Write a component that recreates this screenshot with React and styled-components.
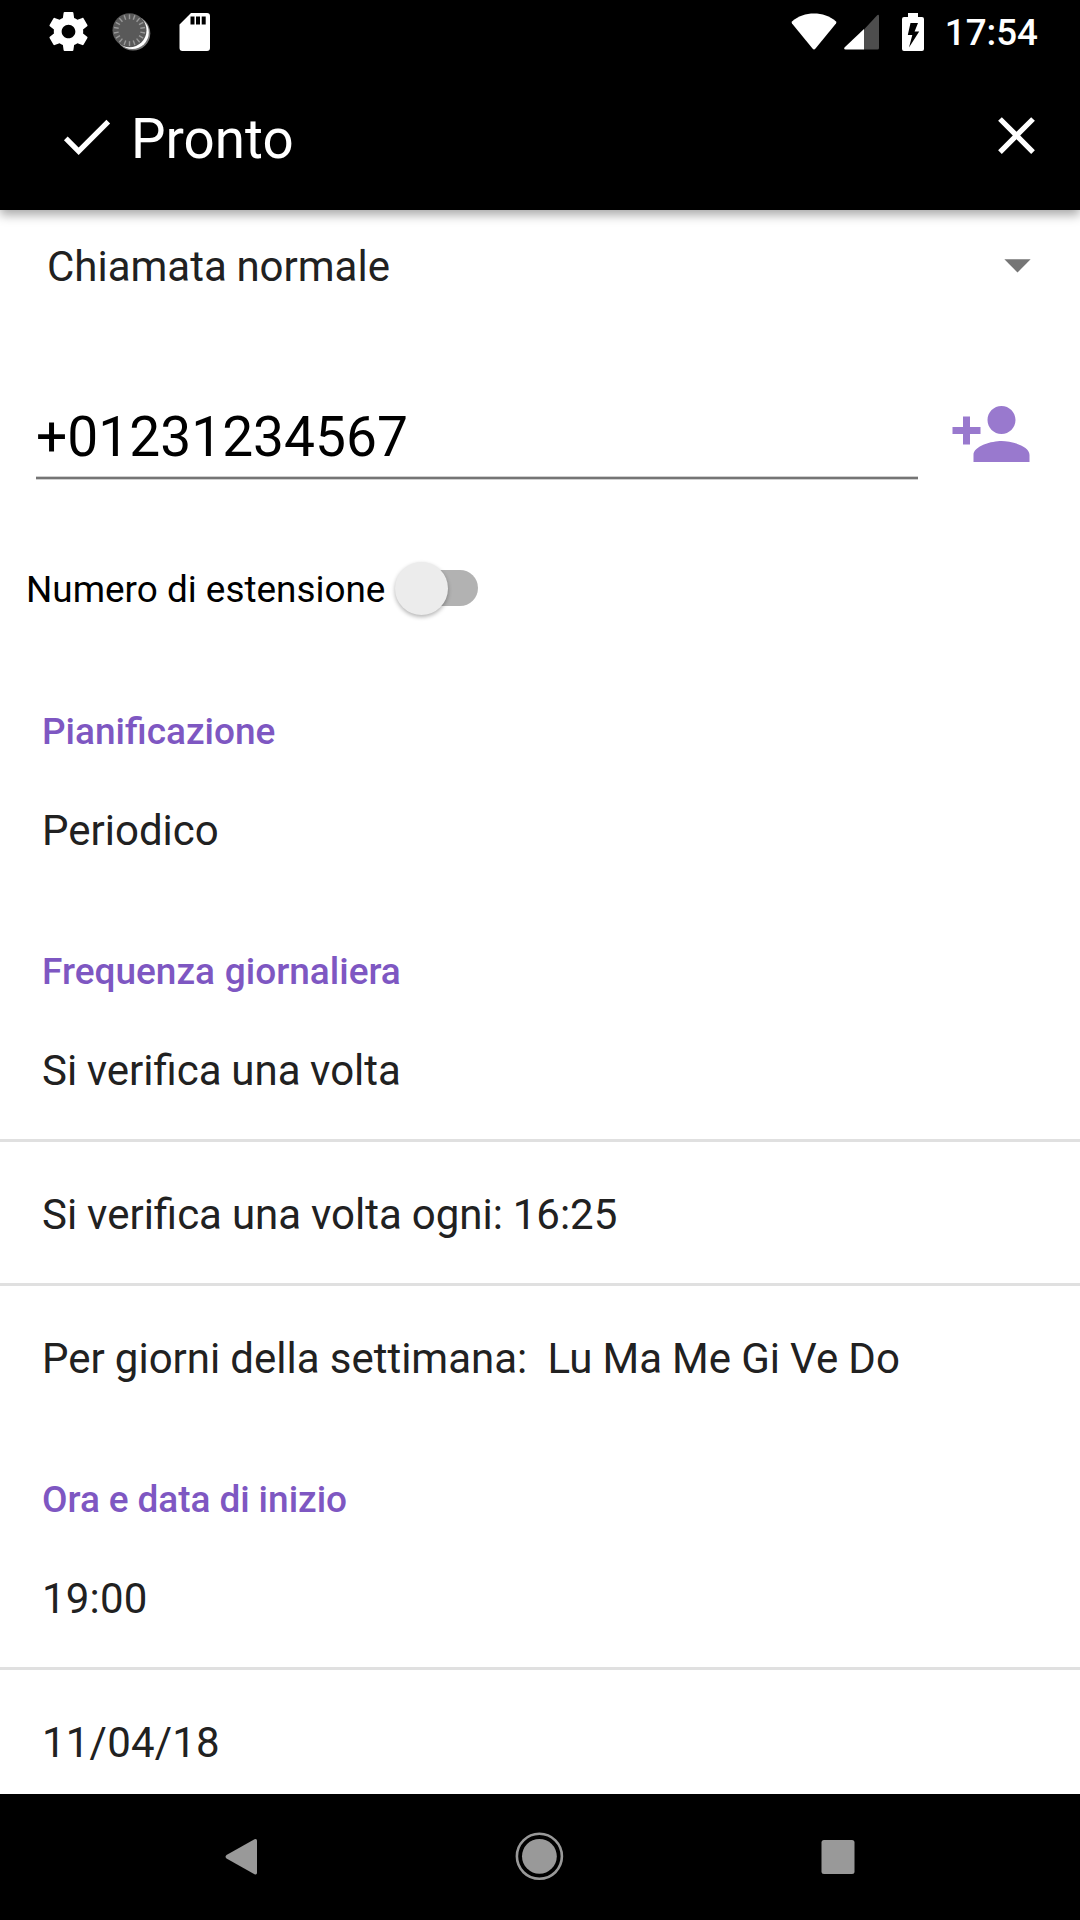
import React from "react";
import styled, { createGlobalStyle } from "styled-components";

const GlobalStyle = createGlobalStyle`
  * { box-sizing: border-box; }
  html, body { margin: 0; padding: 0; background: #fff; }
  body { font-family: Roboto, "Noto Sans", sans-serif; }
`;

const Screen = styled.div`
  width: 1080px;
  height: 1920px;
  display: flex;
  flex-direction: column;
  overflow: hidden;
  background: #fff;
`;

const Icon = styled.svg.attrs({ "aria-hidden": true })`
  display: block;
  flex: none;
  width: ${(p) => p.$w}px;
  height: ${(p) => p.$h || p.$w}px;
  fill: ${(p) => p.$color || "#fff"};
`;

const TopArea = styled.header`
  flex: none;
  height: 210px;
  background: #000;
  color: #fff;
  box-shadow: 0 5px 10px rgba(0, 0, 0, 0.34);
`;

const StatusBar = styled.div`
  height: 63px;
  display: flex;
  justify-content: space-between;
  padding: 0 42px 0 45px;
`;

const StatusGroup = styled.div`
  display: flex;
  align-items: center;
  gap: ${(p) => p.$gap}px;
`;

const Clock = styled.time`
  margin-left: -1px;
  font-size: 36.75px;
  font-weight: 500;
  line-height: 44px;
  padding-top: 3px;
`;

const Toolbar = styled.div`
  height: 147px;
  display: flex;
  align-items: center;
  justify-content: space-between;
  padding: 0 32px 0 55px;
`;

const BarButton = styled.button`
  display: flex;
  align-items: center;
  gap: 13px;
  padding: 0 0 ${(p) => p.$lift || 0}px;
  border: 0;
  background: none;
  color: #fff;
  font: 400 54.75px/64px Roboto, "Noto Sans", sans-serif;
`;

const BarLabel = styled.span`
  padding-top: 5px;
`;

const Form = styled.main`
  flex: 1;
  min-height: 0;
  overflow: hidden;
`;

const Select = styled.div`
  height: 126px;
  display: flex;
  justify-content: space-between;
  padding: 23px 31px 0 47px;
  color: #212121;
  font-size: 42px;
  line-height: 68px;
  word-spacing: -0.8px;
`;

const PhoneRow = styled.div`
  height: 184px;
  display: flex;
  justify-content: space-between;
  padding: 56px 47px 0 36px;
`;

const PhoneField = styled.div`
  width: 882px;
  height: 87px;
  padding-top: 13px;
  color: #000;
  font-size: 55.125px;
  line-height: 64px;
  border-bottom: 2px solid #757575;
  box-shadow: 0 1px 0 #d0d0d0, inset 0 -1px 0 #d0d0d0;
`;

const SwitchRow = styled.div`
  height: 139px;
  display: flex;
  align-items: center;
  gap: 10px;
  padding: 0 0 3px 26px;
`;

const SwitchLabel = styled.span`
  padding-top: 3px;
  color: #000;
  font-size: 36.9px;
  line-height: 44px;
`;

const Track = styled.div`
  width: 83px;
  height: 36px;
  display: flex;
  align-items: center;
  border-radius: 18px;
  background: linear-gradient(90deg, transparent 26px, #b2b2b2 26px);
`;

const Thumb = styled.div`
  width: 53px;
  height: 53px;
  flex: none;
  border-radius: 50%;
  background: #ececec;
  box-shadow: 0 2px 4px rgba(0, 0, 0, 0.3);
`;

const SectionTitle = styled.h2`
  height: 99px;
  margin: 0;
  padding: 51px 42px 0;
  color: #7e57c2;
  font-size: 37px;
  font-weight: 500;
  line-height: 44px;
  word-spacing: ${(p) => p.$space || 0}px;
`;

const Row = styled.div`
  height: ${(p) => (p.$divided ? 144 : 141)}px;
  padding: 48px 42px 0;
  color: #212121;
  font-size: 42px;
  line-height: 50px;
  letter-spacing: ${(p) => (p.$numeric ? "0.2px" : "normal")};
  word-spacing: ${(p) => p.$space || 0}px;
  white-space: pre;
  border-bottom: ${(p) => (p.$divided ? "3px solid #e0e0e0" : "0")};
`;

const NavBar = styled.nav`
  flex: none;
  height: 126px;
  display: flex;
  justify-content: space-between;
  align-items: center;
  padding: 0 210px 1px;
  background: #000;
`;

const Gear = () => (
  <Icon $w={47} viewBox="0 0 24 24">
    <path d="M19.43 12.98c.04-.32.07-.64.07-.98s-.03-.66-.07-.98l2.11-1.65c.19-.15.24-.42.12-.64l-2-3.46c-.12-.22-.39-.3-.61-.22l-2.49 1c-.52-.4-1.08-.73-1.69-.98l-.38-2.65C14.46 2.18 14.25 2 14 2h-4c-.25 0-.46.18-.49.42l-.38 2.65c-.61.25-1.17.59-1.69.98l-2.49-1c-.23-.09-.49 0-.61.22l-2 3.46c-.13.22-.07.49.12.64l2.11 1.65c-.04.32-.07.65-.07.98s.03.66.07.98l-2.11 1.65c-.19.15-.24.42-.12.64l2 3.46c.12.22.39.3.61.22l2.49-1c.52.4 1.08.73 1.69.98l.38 2.65c.03.24.24.42.49.42h4c.25 0 .46-.18.49-.42l.38-2.65c.61-.25 1.17-.59 1.69-.98l2.49 1c.23.09.49 0 .61-.22l2-3.46c.12-.22.07-.49-.12-.64l-2.11-1.65zM12 15.5c-1.93 0-3.5-1.57-3.5-3.5s1.57-3.5 3.5-3.5 3.5 1.57 3.5 3.5-1.57 3.5-3.5 3.5z" />
  </Icon>
);

const TICKS = Array.from({ length: 18 }, (_, i) => i * 20);

const Dial = () => (
  <Icon $w={40} viewBox="0 0 40 40">
    <circle cx="21" cy="21.3" r="17.3" fill="#777" />
    <circle cx="20.2" cy="20.4" r="16.6" />
    <circle cx="17.500" cy="18.2" r="17" fill="#595959" />
    {TICKS.map((a) => (
      <path
        key={a}
        d="M17.500 2.400v4.800"
        stroke="#999"
        strokeWidth="1.400"
        transform={`rotate(${a} 17.500 18.2)`}
      />
    ))}
  </Icon>
);

const SdCard = () => (
  <Icon $w={32} $h={40} viewBox="0 0 32 40">
    <path
      fillRule="evenodd"
      d="M12 1h16a3 3 0 0 1 3 3v32a3 3 0 0 1-3 3H3.500a3 3 0 0 1-3-3V12.500zM11.500 4.500v8h4v-8zM17 4.500v8h4v-8zM22.700 4.500v8h4v-8z"
    />
  </Icon>
);

const Wifi = () => (
  <Icon $w={46} $h={38} viewBox="0 0 46 38">
    <path d="M1 8.500C7 3 15 .500 23 .500S39 3 45 8.500q.800.900 0 2L24.500 35.500q-1.500 1.800-3 0L1 10.500q-.800-1.100 0-2z" />
  </Icon>
);

const Signal = () => (
  <Icon $w={36} $h={36} viewBox="0 0 36 36">
    <path fill="#4d4d4d" d="M20 15.500 33.200 1.200q1.800-1 1.800 1V34q0 1.500-1.500 1.500H20z" />
    <path d="M20 15v20.500H1.500Q-.500 35.500 .500 33.500z" />
  </Icon>
);

const Battery = () => (
  <Icon $w={22} $h={38} viewBox="0 0 22 38">
    <path
      fillRule="evenodd"
      d="M6 0h10v4h4a2 2 0 0 1 2 2v30a2 2 0 0 1-2 2H2a2 2 0 0 1-2-2V6a2 2 0 0 1 2-2h4zM8.500 10 5.800 22h4.500L7 34.500 17.200 18.500h-4.600L16 10z"
    />
  </Icon>
);

const Check = () => (
  <Icon $w={63} viewBox="0 0 24 24">
    <path d="M9 16.170 4.830 12l-1.420 1.410L9 19 21 7l-1.410-1.410z" />
  </Icon>
);

const Close = () => (
  <Icon $w={63} viewBox="0 0 24 24">
    <path d="M19 6.410 17.590 5 12 10.590 6.410 5 5 6.410 10.590 12 5 17.590 6.410 19 12 13.410 17.590 19 19 17.590 13.410 12z" />
  </Icon>
);

const PersonAdd = () => (
  <Icon $w={84} $color="#9979ce" viewBox="0 0 24 24">
    <path d="M15 12c2.210 0 4-1.790 4-4s-1.790-4-4-4-4 1.790-4 4 1.790 4 4 4zm-9-2V7H4v3H1v2h3v3h2v-3h3v-2H6zm9 4c-2.670 0-8 1.340-8 4v2h16v-2c0-2.660-5.330-4-8-4z" />
  </Icon>
);

const schedule = [
  {
    title: "Pianificazione",
    rows: [{ text: "Periodico" }],
  },
  {
    title: "Frequenza giornaliera",
    space: 0.6,
    rows: [
      { text: "Si verifica una volta", space: -0.8 },
      { text: "Si verifica una volta ogni: 16:25", space: -0.5 },
      { text: "Per giorni della settimana:  Lu Ma Me Gi Ve Do", space: -0.3 },
    ],
  },
  {
    title: "Ora e data di inizio",
    space: -0.3,
    rows: [
      { text: "19:00", numeric: true },
      { text: "11/04/18", numeric: true },
    ],
  },
];

export default function App() {
  return (
    <Screen>
      <GlobalStyle />
      <TopArea>
        <StatusBar>
          <StatusGroup $gap={27}>
            <StatusGroup $gap={20}>
              <Gear />
              <Dial />
            </StatusGroup>
            <SdCard />
          </StatusGroup>
          <StatusGroup $gap={22}>
            <StatusGroup $gap={7}>
              <Wifi />
              <Signal />
            </StatusGroup>
            <Battery />
            <Clock>17:54</Clock>
          </StatusGroup>
        </StatusBar>
        <Toolbar>
          <BarButton>
            <Check />
            <BarLabel>Pronto</BarLabel>
          </BarButton>
          <BarButton aria-label="Chiudi" $lift={2}>
            <Close />
          </BarButton>
        </Toolbar>
      </TopArea>

      <Form>
        <Select>
          Chiamata normale
          <Icon $w={63} $color="#757575" viewBox="0 0 24 24">
            <path d="M7 10l5 5 5-5z" />
          </Icon>
        </Select>
        <PhoneRow>
          <PhoneField>+01231234567</PhoneField>
          <PersonAdd />
        </PhoneRow>
        <SwitchRow>
          <SwitchLabel>Numero di estensione</SwitchLabel>
          <Track>
            <Thumb />
          </Track>
        </SwitchRow>
        {schedule.map((section) => (
          <section key={section.title}>
            <SectionTitle $space={section.space}>{section.title}</SectionTitle>
            {section.rows.map((row, i) => (
              <Row
                key={row.text}
                $divided={i < section.rows.length - 1}
                $numeric={row.numeric}
                $space={row.space}
              >
                {row.text}
              </Row>
            ))}
          </section>
        ))}
      </Form>

      <NavBar>
        <Icon $w={63} $color="#999" viewBox="0 0 63 63">
          <path d="M44.500 14.200q2.500-1 2.500 1.500v32q0 2.500-2.500 1.500L16.500 33.500q-2-1.700 0-3.500z" />
        </Icon>
        <Icon $w={63} $color="#999" viewBox="0 0 63 63">
          <circle cx="30.400" cy="31.300" r="22.500" fill="none" stroke="#999" strokeWidth="2.600" />
          <circle cx="30.400" cy="31.300" r="17.400" />
        </Icon>
        <Icon $w={63} $color="#999" viewBox="0 0 63 63">
          <rect x="14.500" y="15" width="33" height="34" rx="2.500" />
        </Icon>
      </NavBar>
    </Screen>
  );
}
